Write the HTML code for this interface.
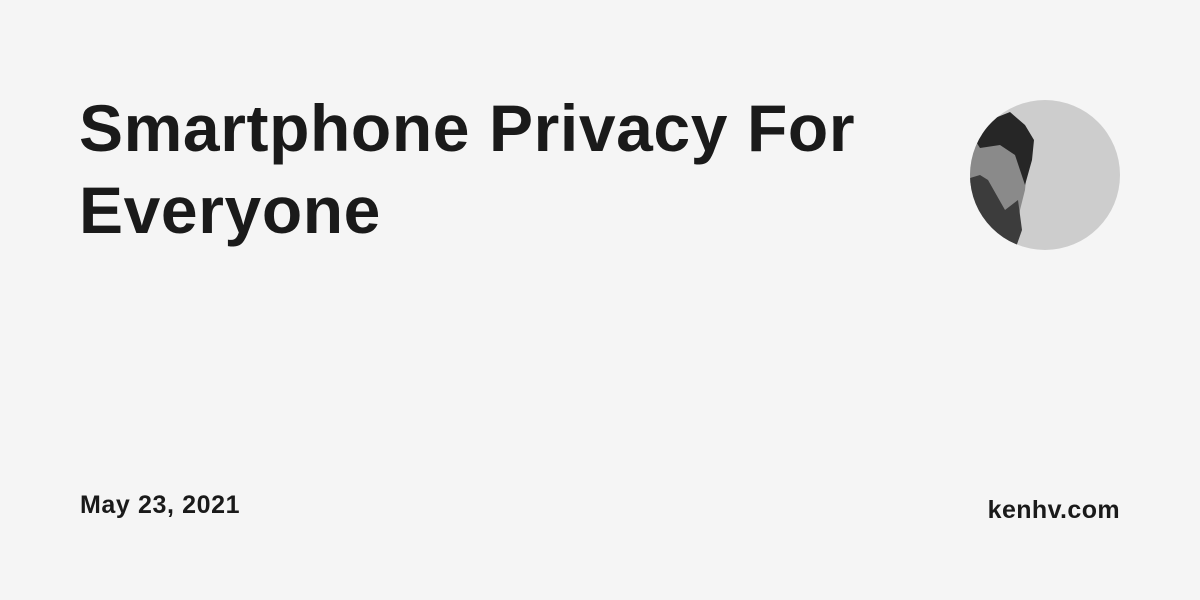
<!DOCTYPE html>
<html><head><style>
body{margin:0;width:1200px;height:600px;background:#f5f5f5;font-family:"Liberation Sans",sans-serif;color:#1a1a1a;position:relative;overflow:hidden}
h1{position:absolute;left:79px;top:87px;margin:0;font-size:66px;line-height:82px;font-weight:700;width:900px;letter-spacing:0.6px}
.d{position:absolute;left:80px;top:491px;font-size:25px;font-weight:700;letter-spacing:0.6px}
.s{position:absolute;right:80px;top:496px;font-size:25px;font-weight:700;letter-spacing:0.4px}
svg{position:absolute;left:970px;top:100px}
</style></head><body>
<h1>Smartphone Privacy For Everyone</h1>
<svg width="150" height="150" viewBox="0 0 150 150">
<defs><clipPath id="c"><circle cx="75" cy="75" r="75"/></clipPath></defs>
<g clip-path="url(#c)">
<rect width="150" height="150" fill="#cdcdcd"/>
<path d="M0 150 L0 30 L20 25 L50 35 L58 60 L55 90 L50 110 L45 150 Z" fill="#8a8a8a"/>
<path d="M5 40 L20 20 L40 12 L55 25 L64 40 L62 60 L55 85 L50 70 L45 55 L30 45 L10 48 Z" fill="#262626"/>
<path d="M0 78 L10 75 L18 80 L35 110 L48 100 L52 130 L45 150 L0 150 Z" fill="#3c3c3c"/>
<path d="M0 150 L0 135 L25 140 L45 150 Z" fill="#555"/>
</g></svg>
<div class="d">May 23, 2021</div>
<div class="s">kenhv.com</div>
</body></html>
